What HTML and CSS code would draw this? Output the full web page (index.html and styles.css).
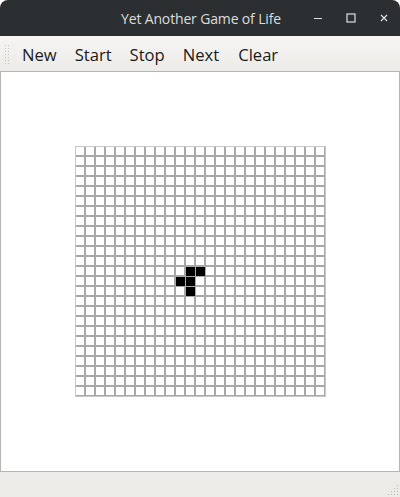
FILE: index.html
```html
<!DOCTYPE html>
<html>
<head>
<meta charset="utf-8">
<link rel="stylesheet" href="styles.css">
</head>
<body>
<div class="window">
  <div class="titlebar">
    <div class="title">Yet Another Game of Life</div>
    <div class="controls">
      <span class="ctl min"><svg width="10" height="10" viewBox="0 0 10 10"><rect x="1" y="5" width="8" height="1" fill="#dfdfdf"/></svg></span>
      <span class="ctl max"><svg width="10" height="10" viewBox="0 0 10 10"><rect x="1" y="1" width="8" height="8" fill="none" stroke="#dfdfdf" stroke-width="1.2"/></svg></span>
      <span class="ctl close"><svg width="10" height="10" viewBox="0 0 10 10"><path d="M2 2 L8 8 M8 2 L2 8" stroke="#dfdfdf" stroke-width="1.2"/></svg></span>
    </div>
  </div>
  <div class="toolbar">
    <div class="grip"></div>
    <button class="tool">New</button>
    <button class="tool">Start</button>
    <button class="tool">Stop</button>
    <button class="tool">Next</button>
    <button class="tool">Clear</button>
  </div>
  <div class="canvas">
    <div class="board" id="board"></div>
  </div>
  <div class="statusbar">
    <div class="sizegrip"></div>
  </div>
</div>
<script src="app.js"></script>
</body>
</html>
```

FILE: styles.css
```css
html, body {
  margin: 0;
  padding: 0;
  background: #ffffff;
}
.window {
  width: 400px;
  height: 497px;
  display: flex;
  flex-direction: column;
  font-family: "Open Sans", "Noto Sans", sans-serif;
}
.titlebar {
  height: 36px;
  flex: none;
  background: #2c2f32;
  border-radius: 8px 8px 0 0;
  position: relative;
  display: flex;
  align-items: center;
  justify-content: center;
}
.title {
  color: #dcdcdc;
  font-size: 14px;
  letter-spacing: -0.15px;
  padding-top: 1px;
  padding-left: 2px;
}
.controls {
  position: absolute;
  right: 0;
  top: 0;
  height: 36px;
  display: flex;
  align-items: center;
}
.ctl {
  width: 34px;
  display: flex;
  justify-content: center;
  align-items: center;
}
.ctl.min { margin-right: -1px; }
.ctl.close { width: 32px; margin-left: 0; }
.toolbar {
  height: 35px;
  flex: none;
  background: linear-gradient(#f6f5f3, #edebe8);
  display: flex;
  align-items: center;
  padding-left: 4px;
}
.grip {
  width: 5px;
  height: 20px;
  margin-right: 4px;
  margin-top: 1px;
  background-image: radial-gradient(circle, #c4c1bd 0.8px, transparent 1px);
  background-size: 3px 3px;
}
.tool {
  border: none;
  background: none;
  font-family: "Open Sans", "Noto Sans", sans-serif;
  font-size: 16.6px;
  color: #1a1a1a;
  padding: 0 9px;
  height: 35px;
  margin: 0;
  padding-top: 2px;
}
.tool:last-child {
  padding-left: 10px;
}
.canvas {
  flex: none;
  height: 399px;
  border: 1px solid #b8b5b1;
  background: #ffffff;
  display: flex;
  align-items: center;
  justify-content: center;
}
.board {
  display: grid;
  grid-template-columns: repeat(25, 8px);
  grid-auto-rows: 8px;
  gap: 2px;
  background: #a8a8a8;
  border: 1px solid #c8c8c8;
  padding: 0 1px 1px 0;
}
.cell {
  background: #ffffff;
}
.cell.alive {
  background: #000000;
  box-shadow: 1px 1px 0 #000000, 1px 0 0 #000000, 0 1px 0 #000000;
}
.statusbar {
  flex: 1;
  background: #edebe7;
  display: flex;
  justify-content: flex-end;
  align-items: flex-end;
}
.sizegrip {
  width: 11px;
  height: 11px;
  margin: 0 2px 2px 0;
  background-image: radial-gradient(circle, #c0bcb7 0.8px, transparent 1px);
  background-size: 3px 3px;
  clip-path: polygon(100% 0, 100% 100%, 0 100%);
}
```

FILE: app.js
```js
(function () {
  var board = document.getElementById('board');
  var alive = { '12,11': 1, '12,12': 1, '13,10': 1, '13,11': 1, '14,11': 1 };
  for (var r = 0; r < 25; r++) {
    for (var c = 0; c < 25; c++) {
      var d = document.createElement('div');
      d.className = 'cell' + (alive[r + ',' + c] ? ' alive' : '');
      board.appendChild(d);
    }
  }
})();
```
